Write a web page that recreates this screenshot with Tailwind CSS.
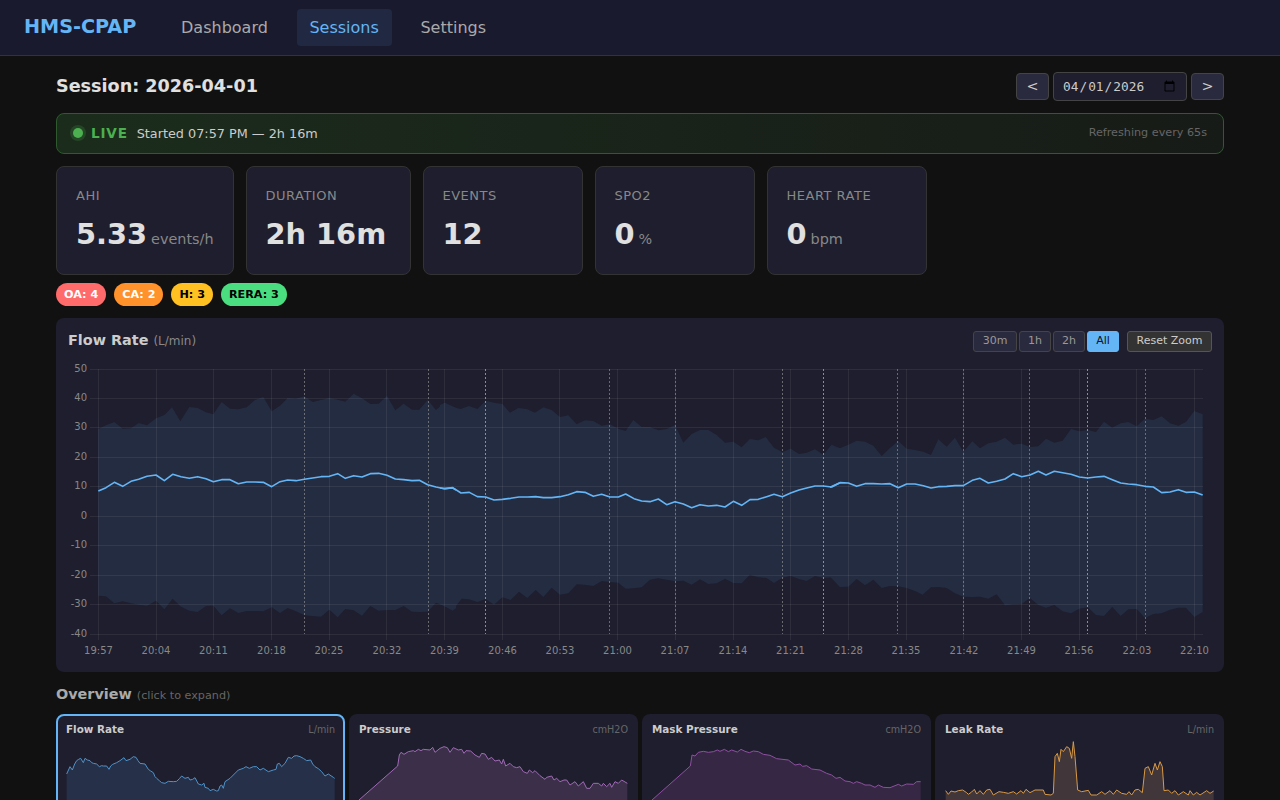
<!DOCTYPE html>
<html lang="en">
<head>
<meta charset="utf-8">
<title>HMS-CPAP</title>
<script src="https://cdn.jsdelivr.net/npm/@tailwindcss/browser@4"></script>
</head>
<body class="bg-[#111111] [font-family:'DejaVu_Sans',sans-serif] text-[#e0e0e0]">
<div class="h-[800px] overflow-hidden">
  <nav class="h-[56px] bg-[#1a1a2e] border-b border-[#333333] flex items-center px-6 gap-8">
    <div class="text-[19.2px] font-bold text-[#64b5f6]">HMS-CPAP</div>
    <div class="flex gap-4">
      <a class="px-[12.8px] py-2 text-[16px] leading-[21px] rounded text-[#aaaaaa]">Dashboard</a>
      <a class="px-[12.8px] py-2 text-[16px] leading-[21px] rounded text-[#64b5f6] bg-[#64b5f6]/10">Sessions</a>
      <a class="px-[12.8px] py-2 text-[16px] leading-[21px] rounded text-[#aaaaaa]">Settings</a>
    </div>
  </nav>

  <main class="px-14 pt-4">
    <div class="flex items-center justify-between h-[29px] mb-3">
      <h1 class="text-[17.6px] leading-[27px] font-bold text-[#e0e0e0]">Session: 2026-04-01</h1>
      <div class="flex items-center gap-1">
        <button class="w-[33px] h-[27px] bg-[#2a2a3e] border border-[#444444] rounded text-[#cccccc] text-[14.4px]">&lt;</button>
        <input type="date" value="2026-04-01" class="w-[134px] h-[29px] px-2 bg-[#1e1e2e] border border-[#444444] rounded text-[#cccccc] text-[12.8px] [font-family:'DejaVu_Sans_Mono',monospace]">
        <button class="w-[33px] h-[27px] bg-[#2a2a3e] border border-[#444444] rounded text-[#cccccc] text-[14.4px]">&gt;</button>
      </div>
    </div>

    <div class="h-[41px] mb-3 flex items-center justify-between pl-[16px] pr-4 rounded-lg border border-[#2e5a2e] bg-linear-to-r from-[#1b2c1c] to-[#171b17]">
      <div class="flex items-center">
        <span class="w-[10px] h-[10px] rounded-full bg-[#4caf50] shadow-[0_0_0_3px_rgba(76,175,80,0.2)] mr-[8px]"></span>
        <span class="text-[13.6px] font-bold tracking-[0.8px] text-[#4caf50] mr-[9px]">LIVE</span>
        <span class="text-[12.8px] text-[#cccccc]">Started 07:57 PM — 2h 16m</span>
      </div>
      <span class="text-[11.2px] text-[#666666]">Refreshing every 65s</span>
    </div>

    <div class="flex gap-3 mb-2">
      <div class="h-[109px] min-w-[160px] px-[19px] pt-[21px] bg-[#1e1e2e] border border-[#333333] rounded-lg">
        <div class="text-[13px] leading-[16px] tracking-[0.5px] text-[#888888] mb-[10px]">AHI</div>
        <div class="flex items-baseline"><span class="text-[28.8px] leading-[40px] font-bold text-[#e0e0e0]">5.33</span><span class="text-[14.4px] text-[#888888] ml-1">events/h</span></div>
      </div>
      <div class="h-[109px] w-[165px] px-[19px] pt-[21px] bg-[#1e1e2e] border border-[#333333] rounded-lg">
        <div class="text-[13px] leading-[16px] tracking-[0.5px] text-[#888888] mb-[10px]">DURATION</div>
        <div class="flex items-baseline"><span class="text-[28.8px] leading-[40px] font-bold text-[#e0e0e0]">2h 16m</span></div>
      </div>
      <div class="h-[109px] min-w-[160px] px-[19px] pt-[21px] bg-[#1e1e2e] border border-[#333333] rounded-lg">
        <div class="text-[13px] leading-[16px] tracking-[0.5px] text-[#888888] mb-[10px]">EVENTS</div>
        <div class="flex items-baseline"><span class="text-[28.8px] leading-[40px] font-bold text-[#e0e0e0]">12</span></div>
      </div>
      <div class="h-[109px] min-w-[160px] px-[19px] pt-[21px] bg-[#1e1e2e] border border-[#333333] rounded-lg">
        <div class="text-[13px] leading-[16px] tracking-[0.5px] text-[#888888] mb-[10px]">SPO2</div>
        <div class="flex items-baseline"><span class="text-[28.8px] leading-[40px] font-bold text-[#e0e0e0]">0</span><span class="text-[14.4px] text-[#888888] ml-1">%</span></div>
      </div>
      <div class="h-[109px] min-w-[160px] px-[19px] pt-[21px] bg-[#1e1e2e] border border-[#333333] rounded-lg">
        <div class="text-[13px] leading-[16px] tracking-[0.5px] text-[#888888] mb-[10px]">HEART RATE</div>
        <div class="flex items-baseline"><span class="text-[28.8px] leading-[40px] font-bold text-[#e0e0e0]">0</span><span class="text-[14.4px] text-[#888888] ml-1">bpm</span></div>
      </div>
    </div>

    <div class="flex gap-2 mb-3 text-[11.2px] font-bold leading-[23px]">
      <span class="h-[23px] px-2 rounded-full bg-[#ff6b6b] text-white">OA: 4</span>
      <span class="h-[23px] px-2 rounded-full bg-[#ff922b] text-white">CA: 2</span>
      <span class="h-[23px] px-2 rounded-full bg-[#ffc021] text-black">H: 3</span>
      <span class="h-[23px] px-2 rounded-full bg-[#4ade80] text-black">RERA: 3</span>
    </div>

    <section class="h-[354px] p-3 bg-[#1e1e2e] rounded-lg mb-3">
      <div class="h-[22px] mb-2 flex items-center justify-between">
        <div class="text-[14.4px] font-bold text-[#cccccc]">Flow Rate <span class="text-[12px] font-normal text-[#888888]">(L/min)</span></div>
        <div class="flex items-center gap-2">
          <div class="flex gap-[2px]">
            <button class="h-[21px] w-[44px] bg-[#2a2a3e] border border-[#444444] rounded-[3px] text-[11px] text-[#999999]">30m</button>
            <button class="h-[21px] w-[32px] bg-[#2a2a3e] border border-[#444444] rounded-[3px] text-[11px] text-[#999999]">1h</button>
            <button class="h-[21px] w-[32px] bg-[#2a2a3e] border border-[#444444] rounded-[3px] text-[11px] text-[#999999]">2h</button>
            <button class="h-[21px] w-[32px] bg-[#64b5f6] border border-[#64b5f6] rounded-[3px] text-[11px] text-[#111111]">All</button>
          </div>
          <button class="h-[21px] w-[85px] bg-[#333333] border border-[#555555] rounded-[3px] text-[11px] text-[#cccccc]">Reset Zoom</button>
        </div>
      </div>
      <svg class="block" width="1144" height="300" viewBox="68 360 1144 300" fill="none">
        <g transform="translate(56 360) scale(.33333)" fill="#242c41">
          <polygon points="127,207 150,196 175,186 200,206 225,205 248,189 273,196 300,175 325,165 348,142 373,184 400,141 425,144 450,157 472,163 497,126 522,146 547,148 572,142 597,120 622,111 647,154 672,137 695,114 720,116 745,109 770,126 795,120 820,114 845,119 868,125 893,101 918,115 943,132 968,131 993,108 1018,151 1043,131 1068,149 1090,149 1115,120 1140,150 1165,128 1200,143 1200,745 1190,752 1165,737 1140,728 1115,755 1090,756 1068,755 1043,738 1018,750 993,750 968,752 943,738 918,767 893,751 868,747 845,772 820,749 795,770 770,768 745,766 720,754 695,744 672,759 647,742 622,754 597,753 572,753 547,759 522,745 497,766 472,737 450,738 425,756 400,752 375,740 350,716 325,748 300,722 273,737 248,734 225,730 200,724 175,730 150,709 127,707"/>
        </g>
        <g transform="translate(440 360) scale(.33333)" fill="#242c41">
          <polygon points="0,135 15,128 40,142 62,147 87,138 112,147 137,122 162,128 187,132 210,158 235,144 260,147 285,158 310,142 335,150 360,171 385,166 410,193 435,181 460,183 485,197 510,193 535,206 557,213 580,180 605,201 630,201 655,211 680,207 705,195 730,248 755,222 780,210 805,210 830,225 855,248 880,245 905,262 930,237 955,241 977,231 1002,263 1027,276 1052,266 1077,282 1100,278 1125,268 1150,284 1175,254 1200,265 1200,680 1175,652 1150,654 1125,648 1100,663 1077,657 1052,648 1027,653 1002,669 980,654 955,652 930,644 905,670 880,669 855,656 830,670 805,672 780,658 755,674 730,662 705,664 680,659 655,655 630,659 605,682 580,685 557,686 535,668 510,666 485,663 460,678 435,674 410,673 385,700 360,704 335,683 310,711 287,690 262,714 237,695 212,720 187,712 162,734 137,717 112,726 87,718 65,716 38,751 0,733"/>
        </g>
        <g transform="translate(830 360) scale(.33333)" fill="#242c41">
          <polygon points="0,258 30,265 55,254 80,242 105,245 130,257 155,288 180,264 205,243 230,266 255,270 280,275 303,285 325,238 350,260 375,233 400,275 427,244 450,265 475,250 500,245 525,233 550,254 575,251 600,261 625,259 648,236 673,248 698,242 723,207 748,214 773,210 798,216 822,185 847,203 872,190 895,186 920,199 945,176 970,180 995,169 1020,190 1045,197 1068,186 1093,153 1118,163 1118,756 1093,771 1068,743 1045,743 1020,749 995,760 970,762 945,774 920,747 895,748 872,768 847,741 822,768 798,765 773,742 748,746 723,760 698,754 673,735 648,743 625,735 600,714 575,732 550,733 525,736 500,703 475,716 450,710 427,711 400,710 375,700 350,684 325,681 303,682 278,704 255,693 230,684 205,679 180,678 155,684 130,659 105,676 80,657 55,680 30,681 0,650"/>
        </g>

        <g stroke="#ffffff" stroke-opacity=".07" stroke-width="1">
          <path d="M90 369.5H1203M90 398.5H1203M90 427.5H1203M90 457.5H1203M90 486.5H1203M90 516.5H1203M90 545.5H1203M90 575.5H1203M90 604.5H1203M90 634.5H1203"/>
          <path d="M98.5 369V640M156.5 369V640M213.5 369V640M271.5 369V640M329.5 369V640M386.5 369V640M444.5 369V640M502.5 369V640M559.5 369V640M617.5 369V640M675.5 369V640M733.5 369V640M790.5 369V640M848.5 369V640M906.5 369V640M963.5 369V640M1021.5 369V640M1079.5 369V640M1136.5 369V640M1194.5 369V640"/>
        </g>

        <g stroke="#8a8a8a" stroke-width="1" stroke-dasharray="2 2" stroke-opacity=".7">
          <path d="M304.5 369V634M428.5 369V634M609.5 369V634M675.5 369V634M782.5 369V634M897.5 369V634M963.5 369V634M1029.5 369V634M1145.5 369V634"/>
        </g>
        <g stroke="#4ade80" stroke-width="1" stroke-dasharray="2 2" stroke-opacity=".8">
          <path d="M485.5 369V634M823.5 369V634M1087.5 369V634"/>
        </g>

        <g fill="none" stroke="#64b5f6" stroke-width="1.6" stroke-linejoin="round">
          <polyline vector-effect="non-scaling-stroke" transform="translate(56 360) scale(.33333)" points="127,393 150,383 175,367 200,379 225,364 248,358 273,349 300,345 325,362 350,343 375,350 400,355 425,350 450,356 472,365 497,359 522,359 547,371 572,366 597,366 622,367 647,380 672,365 695,360 720,362 745,358 770,354 795,350 820,349 845,341 868,355 893,347 918,351 943,341 968,340 993,346 1018,357 1043,359 1068,362 1090,361 1115,374 1140,381 1165,386 1190,384 1200,390"/>
          <polyline vector-effect="non-scaling-stroke" transform="translate(440 360) scale(.33333)" points="0,384 15,386 38,383 63,399 88,397 112,410 137,411 162,420 187,418 212,415 237,411 262,411 287,410 310,413 335,413 360,410 385,404 410,395 435,397 460,409 485,403 510,411 535,411 557,402 582,416 605,423 630,425 655,417 680,434 705,425 730,432 755,443 780,434 805,438 830,436 855,441 880,424 905,436 930,419 955,418 980,410 1002,403 1027,410 1052,399 1077,390 1100,384 1125,378 1150,378 1175,381 1200,368"/>
          <polyline vector-effect="non-scaling-stroke" transform="translate(830 360) scale(.33333)" points="0,382 30,368 55,369 80,379 105,371 130,371 155,372 180,371 205,383 230,372 255,372 280,377 303,384 325,380 350,379 375,377 400,377 427,361 450,355 475,369 500,364 525,357 550,341 575,350 600,345 625,334 648,345 673,334 698,338 723,343 748,351 773,354 798,351 822,349 847,359 872,369 895,372 920,374 945,379 970,381 995,398 1020,396 1045,389 1068,397 1093,396 1118,405"/>
        </g>

        <g class="text-[10px]" fill="#888888" text-anchor="end">
          <text x="87" y="372">50</text>
          <text x="87" y="401">40</text>
          <text x="87" y="430">30</text>
          <text x="87" y="460">20</text>
          <text x="87" y="489">10</text>
          <text x="87" y="519">0</text>
          <text x="87" y="548">-10</text>
          <text x="87" y="578">-20</text>
          <text x="87" y="607">-30</text>
          <text x="87" y="637">-40</text>
        </g>
        <g class="text-[10px]" fill="#888888" text-anchor="middle">
          <text x="98.5" y="654">19:57</text>
          <text x="156" y="654">20:04</text>
          <text x="213.5" y="654">20:11</text>
          <text x="271.5" y="654">20:18</text>
          <text x="329" y="654">20:25</text>
          <text x="387" y="654">20:32</text>
          <text x="444.5" y="654">20:39</text>
          <text x="502.5" y="654">20:46</text>
          <text x="560" y="654">20:53</text>
          <text x="617.5" y="654">21:00</text>
          <text x="675" y="654">21:07</text>
          <text x="733" y="654">21:14</text>
          <text x="790.5" y="654">21:21</text>
          <text x="848.5" y="654">21:28</text>
          <text x="906" y="654">21:35</text>
          <text x="964" y="654">21:42</text>
          <text x="1021.5" y="654">21:49</text>
          <text x="1079" y="654">21:56</text>
          <text x="1137" y="654">22:03</text>
          <text x="1194.5" y="654">22:10</text>
        </g>
      </svg>
    </section>

    <div class="h-[24px] mb-[6px] flex items-baseline gap-[5px]">
      <span class="text-[14.4px] font-bold text-[#aaaaaa]">Overview</span>
      <span class="text-[11.2px] text-[#666666]">(click to expand)</span>
    </div>

    <div class="grid grid-cols-4 gap-1">
      <div class="h-[130px] rounded-lg bg-[#1e1e2e] border-2 border-[#64b5f6] px-2 pt-[6px]">
        <div class="flex justify-between h-[16px] items-center">
          <span class="text-[10.4px] font-bold text-[#cccccc]">Flow Rate</span><span class="text-[9.6px] text-[#666666]">L/min</span>
        </div>
        <svg class="block" width="269" height="100" viewBox="78 204 807 300" fill="none">
          <path fill="#263049" d="M80 312L90 290 97 300 104 282 110 272 116 268 122 265 130 278 135 265 142 270 150 272 155 278 160 280 170 282 178 290 185 287 190 288 200 288 207 298 212 288 218 283 230 278 240 272 252 263 258 272 270 268 280 260 288 262 294 272 300 280 315 282 325 298 332 303 340 308 345 320 350 325 358 332 365 338 375 340 385 334 400 335 410 334 418 326 425 318 435 325 445 322 450 330 458 328 465 323 475 342 485 345 492 340 495 352 505 355 510 362 520 358 530 363 535 362 540 348 545 345 550 355 555 335 570 325 580 315 595 300 610 295 618 290 628 295 640 290 650 290 660 300 670 295 685 305 700 300 708 298 712 282 718 280 725 290 735 280 745 262 755 265 762 258 770 257 780 260 790 265 800 272 812 270 818 282 825 290 835 296 845 305 855 318 865 312 880 322 884 325V510H80Z"/>
          <path vector-effect="non-scaling-stroke" stroke="#4f92c8" stroke-width="1" d="M80 312L90 290 97 300 104 282 110 272 116 268 122 265 130 278 135 265 142 270 150 272 155 278 160 280 170 282 178 290 185 287 190 288 200 288 207 298 212 288 218 283 230 278 240 272 252 263 258 272 270 268 280 260 288 262 294 272 300 280 315 282 325 298 332 303 340 308 345 320 350 325 358 332 365 338 375 340 385 334 400 335 410 334 418 326 425 318 435 325 445 322 450 330 458 328 465 323 475 342 485 345 492 340 495 352 505 355 510 362 520 358 530 363 535 362 540 348 545 345 550 355 555 335 570 325 580 315 595 300 610 295 618 290 628 295 640 290 650 290 660 300 670 295 685 305 700 300 708 298 712 282 718 280 725 290 735 280 745 262 755 265 762 258 770 257 780 260 790 265 800 272 812 270 818 282 825 290 835 296 845 305 855 318 865 312 880 322 884 325"/>
        </svg>
      </div>
      <div class="h-[130px] rounded-lg bg-[#1e1e2e] border-2 border-transparent px-2 pt-[6px]">
        <div class="flex justify-between h-[16px] items-center">
          <span class="text-[10.4px] font-bold text-[#cccccc]">Pressure</span><span class="text-[9.6px] text-[#666666]">cmH2O</span>
        </div>
        <svg class="block" width="269" height="100" viewBox="57 114 807 300" fill="none">
          <path fill="#3b2f49" d="M57 300L173 198 178 165 183 157 192 163 205 155 220 152 225 155 235 148 243 152 250 148 270 150 278 142 285 157 300 145 312 140 322 143 330 157 340 143 355 150 365 148 372 160 378 152 392 153 405 165 418 172 425 160 435 162 445 178 455 172 465 183 478 180 485 192 490 178 497 198 510 190 520 200 530 203 540 200 550 215 562 220 568 210 578 218 585 212 600 227 615 238 620 232 635 228 642 240 650 235 660 245 672 240 680 240 690 255 705 245 715 258 730 245 740 265 750 265 760 250 775 250 785 258 790 250 800 260 810 250 815 262 825 245 835 250 845 240 862 250V414H57Z"/>
          <path vector-effect="non-scaling-stroke" stroke="#a06ab4" stroke-width="1" d="M57 300L173 198 178 165 183 157 192 163 205 155 220 152 225 155 235 148 243 152 250 148 270 150 278 142 285 157 300 145 312 140 322 143 330 157 340 143 355 150 365 148 372 160 378 152 392 153 405 165 418 172 425 160 435 162 445 178 455 172 465 183 478 180 485 192 490 178 497 198 510 190 520 200 530 203 540 200 550 215 562 220 568 210 578 218 585 212 600 227 615 238 620 232 635 228 642 240 650 235 660 245 672 240 680 240 690 255 705 245 715 258 730 245 740 265 750 265 760 250 775 250 785 258 790 250 800 260 810 250 815 262 825 245 835 250 845 240 862 250"/>
        </svg>
      </div>
      <div class="h-[130px] rounded-lg bg-[#1e1e2e] border-2 border-transparent px-2 pt-[6px]">
        <div class="flex justify-between h-[16px] items-center">
          <span class="text-[10.4px] font-bold text-[#cccccc]">Mask Pressure</span><span class="text-[9.6px] text-[#666666]">cmH2O</span>
        </div>
        <svg class="block" width="269" height="100" viewBox="66 114 807 300" fill="none">
          <path fill="#362844" d="M66 300L181 198 186 165 195 168 205 157 220 154 235 157 250 155 262 150 270 154 283 148 295 155 305 150 322 156 333 148 345 154 358 158 370 153 385 155 400 163 420 166 440 176 475 180 495 195 510 192 518 199 530 197 545 207 570 210 590 220 605 225 618 235 630 232 645 243 660 245 670 250 680 245 695 250 705 255 720 255 735 262 745 255 760 262 780 263 805 253 815 258 830 252 850 253 860 245 872 245V414H66Z"/>
          <path vector-effect="non-scaling-stroke" stroke="#8e4fa0" stroke-width="1" d="M66 300L181 198 186 165 195 168 205 157 220 154 235 157 250 155 262 150 270 154 283 148 295 155 305 150 322 156 333 148 345 154 358 158 370 153 385 155 400 163 420 166 440 176 475 180 495 195 510 192 518 199 530 197 545 207 570 210 590 220 605 225 618 235 630 232 645 243 660 245 670 250 680 245 695 250 705 255 720 255 735 262 745 255 760 262 780 263 805 253 815 258 830 252 850 253 860 245 872 245"/>
        </svg>
      </div>
      <div class="h-[130px] rounded-lg bg-[#1e1e2e] border-2 border-transparent px-2 pt-[6px]">
        <div class="flex justify-between h-[16px] items-center">
          <span class="text-[10.4px] font-bold text-[#cccccc]">Leak Rate</span><span class="text-[9.6px] text-[#666666]">L/min</span>
        </div>
        <svg class="block" width="269" height="100" viewBox="60 114 807 300" fill="none">
          <path fill="#41363a" d="M62 272L70 283 78 273 90 276 100 272 113 270 125 278 130 283 140 276 148 268 155 282 165 272 175 283 185 270 195 268 205 285 222 275 235 277 250 280 265 275 275 282 288 272 295 280 303 268 315 278 330 270 355 270 360 283 378 285 385 280 390 170 397 160 403 185 408 148 415 155 425 140 433 145 440 175 445 125 450 170 458 270 470 275 490 271 498 285 515 285 530 275 540 283 555 272 565 283 575 270 590 280 605 283 612 275 620 285 630 270 640 268 652 278 660 205 670 200 680 225 690 190 697 210 705 185 712 200 717 272 730 270 740 280 750 272 760 285 775 275 790 285 795 272 805 285 815 277 825 285 845 272 855 280 866 273V414H62Z"/>
          <path vector-effect="non-scaling-stroke" stroke="#d99a45" stroke-width="1" d="M62 272L70 283 78 273 90 276 100 272 113 270 125 278 130 283 140 276 148 268 155 282 165 272 175 283 185 270 195 268 205 285 222 275 235 277 250 280 265 275 275 282 288 272 295 280 303 268 315 278 330 270 355 270 360 283 378 285 385 280 390 170 397 160 403 185 408 148 415 155 425 140 433 145 440 175 445 125 450 170 458 270 470 275 490 271 498 285 515 285 530 275 540 283 555 272 565 283 575 270 590 280 605 283 612 275 620 285 630 270 640 268 652 278 660 205 670 200 680 225 690 190 697 210 705 185 712 200 717 272 730 270 740 280 750 272 760 285 775 275 790 285 795 272 805 285 815 277 825 285 845 272 855 280 866 273"/>
        </svg>
      </div>
    </div>
  </main>
</div>
</body>
</html>
